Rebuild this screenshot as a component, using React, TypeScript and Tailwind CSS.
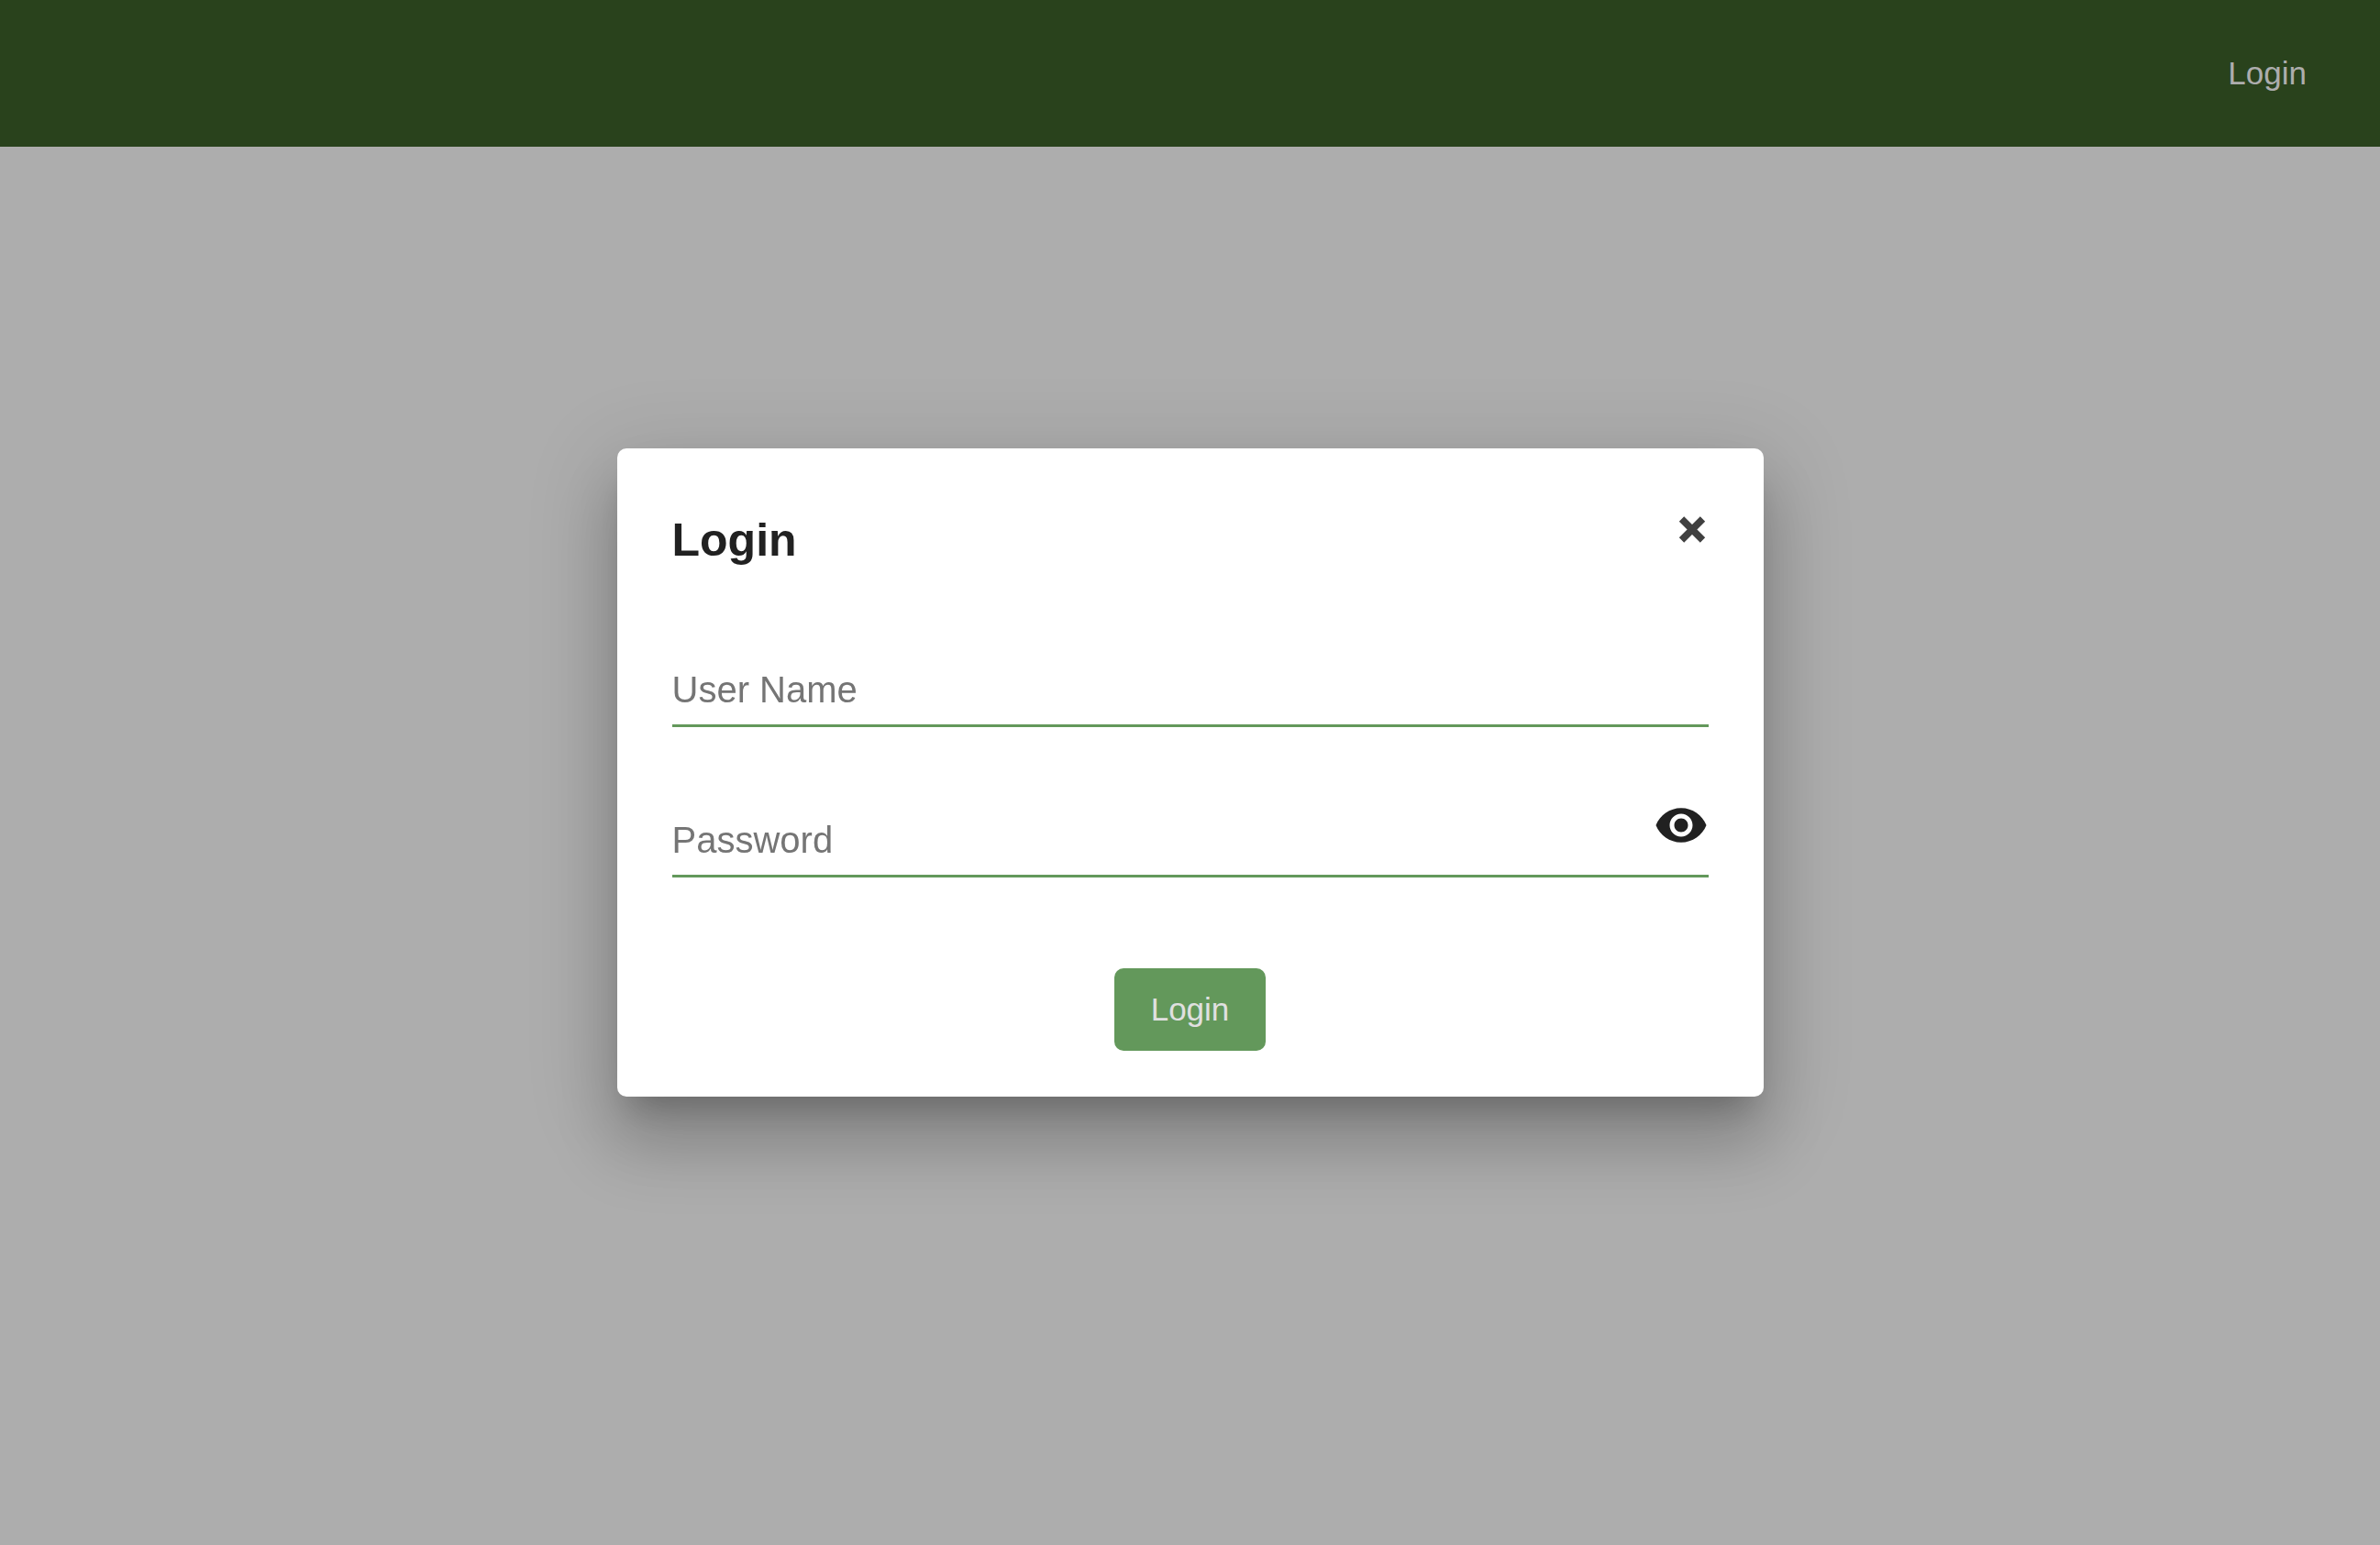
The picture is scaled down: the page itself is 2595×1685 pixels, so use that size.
import { useState } from "react";
import { MdVisibility } from "react-icons/md";

const fieldClass =
  "h-[77px] w-full border-b-3 border-[#63985b] bg-transparent pb-[2px] text-[40px] text-[#212121] placeholder:text-[#757575] outline-none";

function CloseIcon() {
  return (
    <svg viewBox="-18 -28 36 56" className="h-14 w-9" fill="none" stroke="currentColor" strokeWidth="7.6" aria-hidden="true">
      <path d="M-11.5 -11L11.5 12M11.5 -11L-11.5 12" />
    </svg>
  );
}

function LoginDialog() {
  const [visible, setVisible] = useState(false);
  return (
    <div className="fixed inset-0 flex items-center justify-center">
      <section
        role="dialog"
        aria-labelledby="dialog-title"
        className="w-full max-w-[1250px] rounded-[10px] bg-white px-[60px] pt-[60px] pb-[50px] shadow-[0_25px_33px_-15px_rgba(0,0,0,0.21),0_50px_72px_8px_rgba(0,0,0,0.17),0_20px_90px_18px_rgba(0,0,0,0.11)]"
      >
        <header className="flex items-start justify-between">
          <h1 id="dialog-title" className="text-[50px] leading-[80px] font-bold text-[#212121]">
            Login
          </h1>
          <button type="button" aria-label="Close" className="text-[#404040]">
            <CloseIcon />
          </button>
        </header>
        <form className="flex flex-col pt-[87px]" onSubmit={(e) => e.preventDefault()}>
          <input type="text" aria-label="User Name" placeholder="User Name" className={fieldClass} />
          <div className="relative mt-[87px] flex">
            <input
              type={visible ? "text" : "password"}
              aria-label="Password"
              placeholder="Password"
              className={fieldClass}
            />
            <button
              type="button"
              aria-label="Show password"
              onClick={() => setVisible(!visible)}
              className="absolute right-0 bottom-[27px] text-[60px] text-[#212121]"
            >
              <MdVisibility />
            </button>
          </div>
          <button
            type="submit"
            className="mt-[99px] h-[90px] self-center rounded-[10px] bg-[#63985b] px-10 text-[35px] text-[#e0e0e0]"
          >
            Login
          </button>
        </form>
      </section>
    </div>
  );
}

export default function App() {
  return (
    <div className="min-h-screen bg-[#adadad] font-['Liberation_Sans',Arial,sans-serif]">
      <nav className="flex h-40 items-center justify-end bg-[#29421c] px-20">
        <a href="#login" className="text-[35px] text-[#adadad]">
          Login
        </a>
      </nav>
      <LoginDialog />
    </div>
  );
}
